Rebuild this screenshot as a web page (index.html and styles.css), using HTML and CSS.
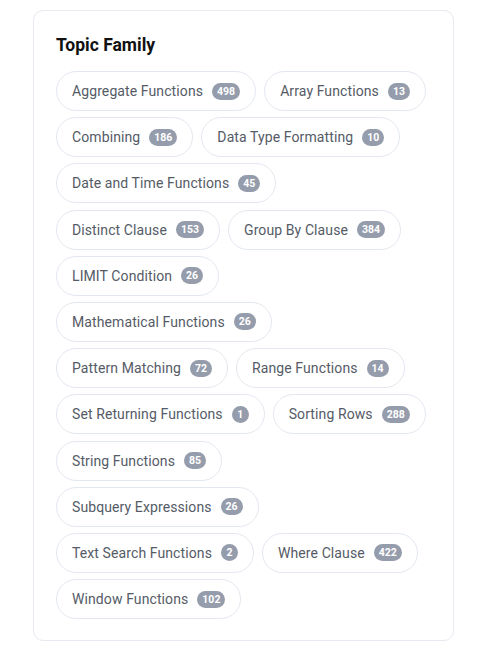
FILE: index.html
```html
<!DOCTYPE html>
<html>
  <head>
    <meta name="viewport" content="width=device-width, initial-scale=1" />
    <link rel="stylesheet" href="styles.css">
  </head>
  <body>
    <main>
      <section class="card">
        <h2 class="card-title">Topic Family</h2>
        <div class="tags">
          <span class="tag">Aggregate Functions <span class="count">498</span></span>
          <span class="tag">Array Functions <span class="count">13</span></span>
          <span class="tag">Combining <span class="count">186</span></span>
          <span class="tag">Data Type Formatting <span class="count">10</span></span>
          <span class="tag">Date and Time Functions <span class="count">45</span></span>
          <span class="tag">Distinct Clause <span class="count">153</span></span>
          <span class="tag">Group By Clause <span class="count">384</span></span>
          <span class="tag">LIMIT Condition <span class="count">26</span></span>
          <span class="tag">Mathematical Functions <span class="count">26</span></span>
          <span class="tag">Pattern Matching <span class="count">72</span></span>
          <span class="tag">Range Functions <span class="count">14</span></span>
          <span class="tag">Set Returning Functions <span class="count">1</span></span>
          <span class="tag">Sorting Rows <span class="count">288</span></span>
          <span class="tag">String Functions <span class="count">85</span></span>
          <span class="tag">Subquery Expressions <span class="count">26</span></span>
          <span class="tag">Text Search Functions <span class="count">2</span></span>
          <span class="tag">Where Clause <span class="count">422</span></span>
          <span class="tag">Window Functions <span class="count">102</span></span>
        </div>
      </section>
    </main>
  </body>
</html>
```

FILE: styles.css
```css
html, body {
  margin: 0;
  padding: 0;
  background: #fff;
  font-family: Roboto, "Noto Sans", sans-serif;
}

main {
  padding: 10px 33px;
}

.card {
  border: 1px solid #e6e9ef;
  border-radius: 10px;
  padding: 22px 22px 21px;
  background: #fff;
}

.card-title {
  margin: 0 0 14px;
  font-size: 17.5px;
  font-weight: 700;
  line-height: 24px;
  color: #111;
}

.tags {
  display: flex;
  flex-wrap: wrap;
  gap: 6.2px 8px;
}

.tag {
  display: inline-flex;
  align-items: center;
  height: 38px;
  padding: 0 15px;
  border: 1px solid #e3e8f0;
  border-radius: 20px;
  font-size: 14px;
  letter-spacing: 0.1px;
  color: #555b66;
  white-space: nowrap;
}

.count {
  display: inline-block;
  margin-left: 9px;
  padding: 0 5px;
  min-width: 7px;
  height: 17px;
  line-height: 17px;
  border-radius: 9px;
  background: #959cab;
  color: #fff;
  font-size: 10.5px;
  font-weight: 700;
  letter-spacing: 0;
  text-align: center;
}
```
